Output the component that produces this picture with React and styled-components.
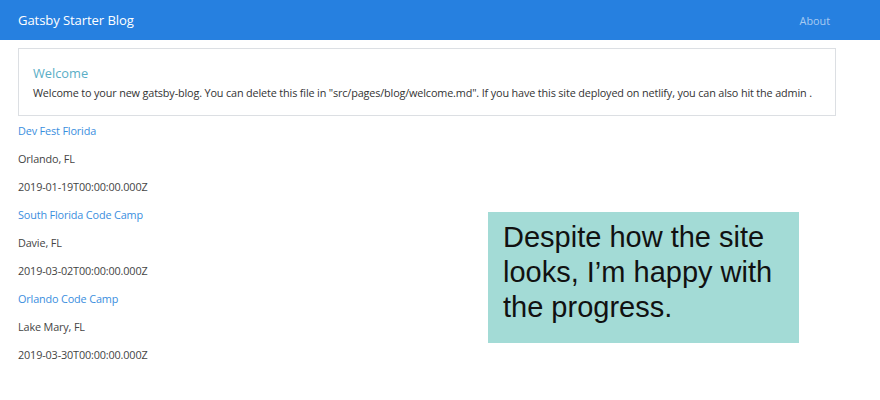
import React from "react";
import styled, { createGlobalStyle } from "styled-components";

const Global = createGlobalStyle`
  html, body { margin: 0; padding: 0; background: #fff; }
  body { font-family: "Open Sans", "Noto Sans", sans-serif; }
`;

const Page = styled.div`
  position: relative;
  width: 880px;
  height: 400px;
  overflow: hidden;
  background: #fff;
`;

const NavBar = styled.header`
  height: 40px;
  background: #2680e0;
  display: flex;
  align-items: center;
  justify-content: space-between;
  padding: 0 50px 0 18px;
`;

const Brand = styled.span`
  color: #fff;
  font-size: 13.1px;
  letter-spacing: -0.1px;
`;

const NavLink = styled.span`
  color: rgba(255, 255, 255, 0.6);
  font-size: 10.8px;
`;

const Main = styled.main`
  padding: 8px 44px 0 18px;
`;

const Card = styled.section`
  border: 1px solid #dcdfe3;
  padding: 15px 14px 13px 14px;
`;

const CardTitle = styled.h2`
  margin: 0 0 2px;
  font-weight: 400;
  font-size: 12.8px;
  color: #5aaec6;
  line-height: 18px;
`;

const CardText = styled.p`
  margin: 0;
  font-size: 10.85px;
  color: #333;
  line-height: 18px;
  letter-spacing: -0.15px;
  white-space: nowrap;
`;

const Line = styled.div`
  height: 28px;
  display: flex;
  align-items: center;
  font-size: 10.85px;
  letter-spacing: -0.15px;
  color: ${(p) => (p.$link ? "#3a8ede" : "#444")};
`;

const Callout = styled.div`
  position: absolute;
  left: 488px;
  top: 212px;
  width: 311px;
  height: 131px;
  background: #a3dbd6;
  box-sizing: border-box;
  padding: 8px 8px 0 15px;
  font-family: "Liberation Sans", Arial, sans-serif;
  font-size: 29px;
  line-height: 35px;
  color: #111;
`;

const events = [
  ["Dev Fest Florida", "Orlando, FL", "2019-01-19T00:00:00.000Z"],
  ["South Florida Code Camp", "Davie, FL", "2019-03-02T00:00:00.000Z"],
  ["Orlando Code Camp", "Lake Mary, FL", "2019-03-30T00:00:00.000Z"],
];

export default function App() {
  return (
    <Page>
      <Global />
      <NavBar>
        <Brand>Gatsby Starter Blog</Brand>
        <NavLink>About</NavLink>
      </NavBar>
      <Main>
        <Card>
          <CardTitle>Welcome</CardTitle>
          <CardText>
            Welcome to your new gatsby-blog. You can delete this file in
            "src/pages/blog/welcome.md". If you have this site deployed on
            netlify, you can also hit the admin .
          </CardText>
        </Card>
        {events.map(([name, place, date]) => (
          <React.Fragment key={name}>
            <Line $link>{name}</Line>
            <Line>{place}</Line>
            <Line>{date}</Line>
          </React.Fragment>
        ))}
      </Main>
      <Callout>
        Despite how the site looks, I’m happy with the progress.
      </Callout>
    </Page>
  );
}
